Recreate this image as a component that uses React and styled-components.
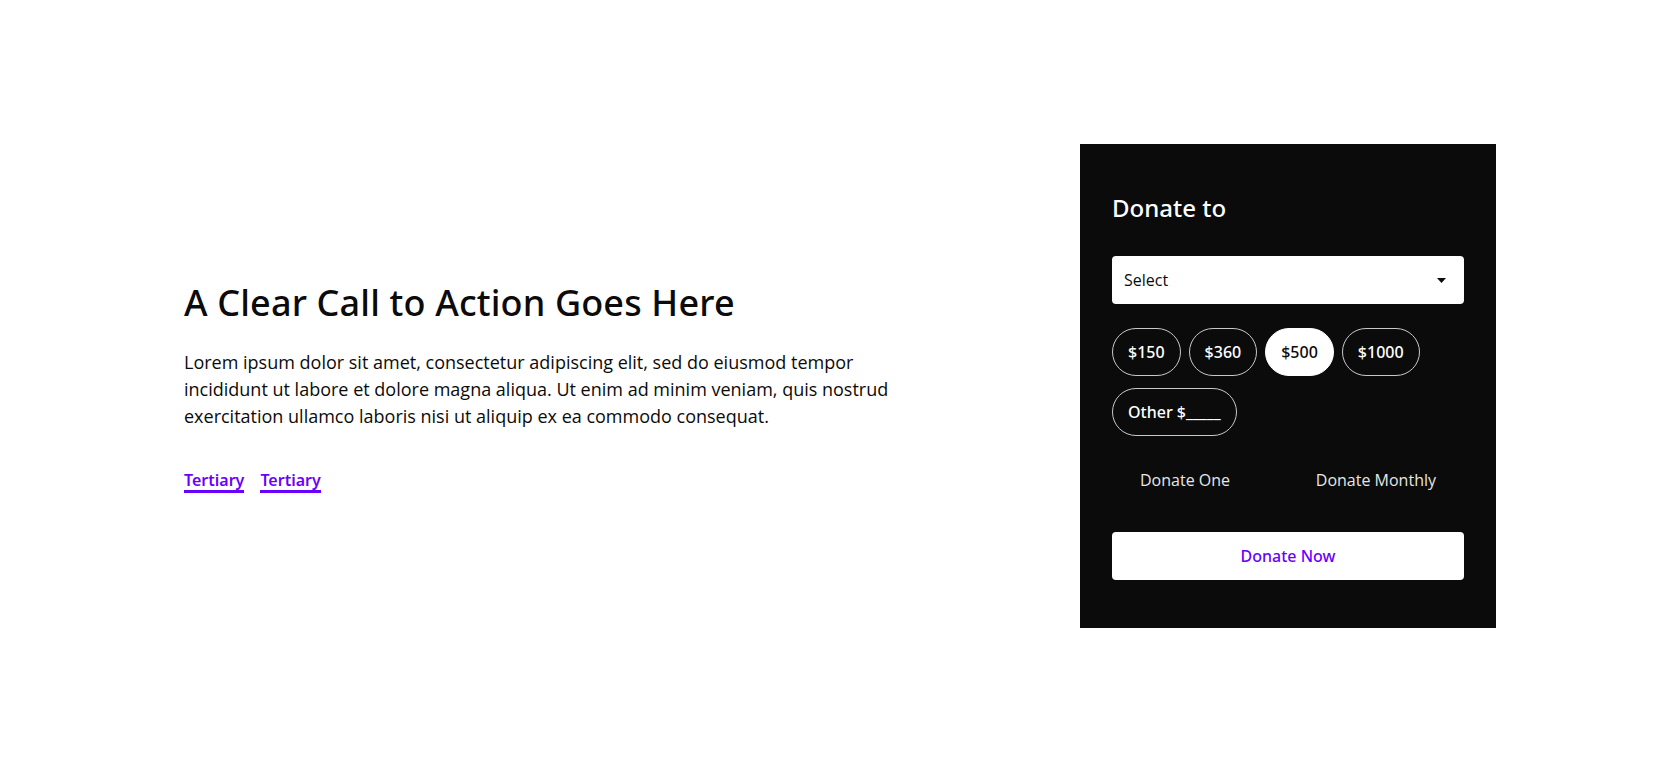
import React, { useState } from "react";
import styled, { createGlobalStyle } from "styled-components";

const GlobalStyle = createGlobalStyle`
  * { box-sizing: border-box; }
  html, body { margin: 0; padding: 0; background: #ffffff; }
  body { font-family: "Open Sans", "Noto Sans", sans-serif; color: #0b0b0b; }
`;

const medium = `"Noto Sans", "Open Sans", sans-serif`;

const Page = styled.main`
  min-height: 100vh;
  display: flex;
  align-items: center;
  justify-content: center;
`;

const Container = styled.section`
  width: 1312px;
  display: flex;
  align-items: center;
  justify-content: space-between;
`;

const Copy = styled.div`
  display: flex;
  flex-direction: column;
  max-width: 720px;
  padding-top: 2px;
`;

const Title = styled.h1`
  margin: 0;
  font-family: ${medium};
  font-size: 36px;
  line-height: 44px;
  font-weight: 500;
  letter-spacing: 0.15px;
  color: #0b0b0b;
`;

const Body = styled.p`
  margin: 24px 0 0;
  font-size: 18px;
  line-height: 27px;
  color: #0b0b0b;
`;

const Links = styled.div`
  display: flex;
  gap: 16px;
  margin-top: 40px;
`;

const TertiaryLink = styled.a`
  font-family: ${medium};
  font-size: 16px;
  line-height: 20px;
  font-weight: 600;
  color: #6a00ff;
  text-decoration: none;
  border-bottom: 3px solid #6a00ff;
  cursor: pointer;
`;

const Card = styled.aside`
  width: 416px;
  background: #0b0b0b;
  padding: 48px 32px;
  display: flex;
  flex-direction: column;
`;

const CardTitle = styled.h2`
  margin: 0;
  font-family: ${medium};
  font-size: 24px;
  line-height: 32px;
  font-weight: 500;
  color: #ffffff;
`;

const SelectBox = styled.div`
  margin-top: 32px;
  height: 48px;
  background: #ffffff;
  border-radius: 4px;
  display: flex;
  align-items: center;
  justify-content: space-between;
  padding: 0 18px 0 12px;
  font-size: 16px;
  color: #0b0b0b;
  cursor: pointer;
`;

const Amounts = styled.div`
  margin-top: 24px;
  display: flex;
  flex-wrap: wrap;
  gap: 12px 8px;
`;

const Pill = styled.button`
  height: 48px;
  padding: 0 15px;
  border-radius: 24px;
  border: 1px solid ${(p) => (p.$active ? "#ffffff" : "#c8c8c8")};
  background: ${(p) => (p.$active ? "#ffffff" : "transparent")};
  color: ${(p) => (p.$active ? "#0b0b0b" : "#ffffff")};
  font-family: ${medium};
  font-size: 16px;
  font-weight: 500;
  cursor: pointer;
`;

const Frequency = styled.div`
  margin-top: 32px;
  display: flex;
  justify-content: space-between;
  padding: 0 28px;
`;

const FrequencyOption = styled.button`
  background: none;
  border: none;
  padding: 0;
  font-family: inherit;
  font-size: 16px;
  line-height: 24px;
  color: #e6e6e6;
  cursor: pointer;
`;

const DonateButton = styled.button`
  margin-top: 40px;
  height: 48px;
  border: none;
  border-radius: 4px;
  background: #ffffff;
  color: #6a00ff;
  font-family: ${medium};
  font-size: 16px;
  font-weight: 500;
  cursor: pointer;
`;

const Caret = () => (
  <svg width="9" height="5" viewBox="0 0 9 5" aria-hidden="true">
    <path d="M0 0h9L4.5 5z" fill="#0b0b0b" />
  </svg>
);

const amounts = ["$150", "$360", "$500", "$1000", "Other $_____"];

export default function App() {
  const [selected, setSelected] = useState("$500");

  return (
    <>
      <GlobalStyle />
      <Page>
        <Container>
          <Copy>
            <Title>A Clear Call to Action Goes Here</Title>
            <Body>
              Lorem ipsum dolor sit amet, consectetur adipiscing elit, sed do eiusmod tempor
              incididunt ut labore et dolore magna aliqua. Ut enim ad minim veniam, quis nostrud
              exercitation ullamco laboris nisi ut aliquip ex ea commodo consequat.
            </Body>
            <Links>
              <TertiaryLink>Tertiary</TertiaryLink>
              <TertiaryLink>Tertiary</TertiaryLink>
            </Links>
          </Copy>

          <Card>
            <CardTitle>Donate to</CardTitle>
            <SelectBox>
              <span>Select</span>
              <Caret />
            </SelectBox>
            <Amounts>
              {amounts.map((a) => (
                <Pill key={a} $active={a === selected} onClick={() => setSelected(a)}>
                  {a}
                </Pill>
              ))}
            </Amounts>
            <Frequency>
              <FrequencyOption>Donate One</FrequencyOption>
              <FrequencyOption>Donate Monthly</FrequencyOption>
            </Frequency>
            <DonateButton>Donate Now</DonateButton>
          </Card>
        </Container>
      </Page>
    </>
  );
}
